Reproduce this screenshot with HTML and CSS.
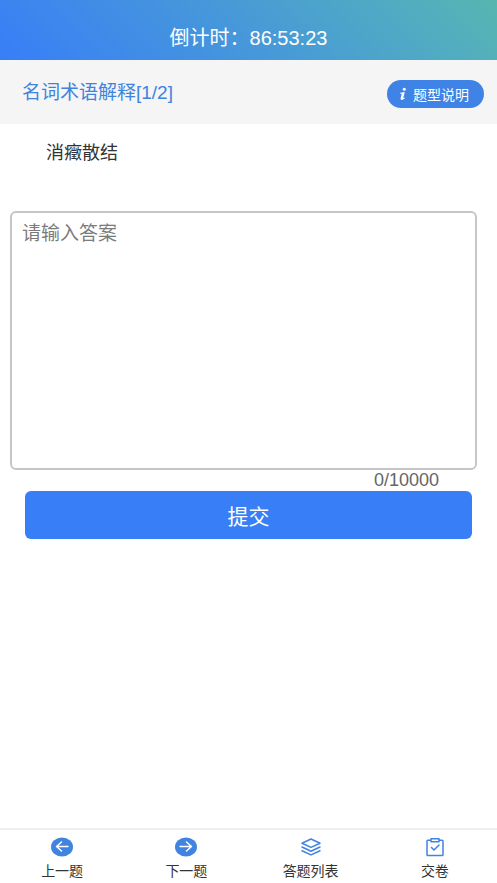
FILE: index.html
```html
<!DOCTYPE html>
<html lang="zh-CN">
<head>
<meta charset="utf-8">
<meta name="viewport" content="width=device-width, initial-scale=1">
<title>名词术语解释</title>
<link rel="stylesheet" href="styles.css">
</head>
<body>
<header class="timer">倒计时：86:53:23</header>
<section class="section-bar">
  <h1 class="section-title">名词术语解释[1/2]</h1>
  <button class="help" type="button">
    <svg class="help-icon" viewBox="0 0 8 14" aria-hidden="true">
      <circle cx="5.3" cy="2.3" r="1.5"/>
      <path d="M1.3 5.8 5.8 5 4.3 10.7c-.1.6.4.7 1.5-.1l.3.5C5 12.3 3.9 12.9 2.9 12.9 1.8 12.9 1.4 12.2 1.7 11.1L2.8 6.7H1.1Z"/>
    </svg>
    题型说明
  </button>
</section>
<main class="content">
  <label class="question" for="answer">消癥散结</label>
  <textarea class="answer" id="answer" placeholder="请输入答案" maxlength="10000"></textarea>
  <div class="counter">0/10000</div>
  <button class="submit" type="button">提交</button>
</main>
<nav class="tabs">
  <a class="tab" href="#prev">
    <svg class="tab-icon" viewBox="0 0 22 20" aria-hidden="true">
      <ellipse class="disc" cx="11" cy="10" rx="11" ry="9.5"/>
      <path class="arrow" d="M17 9.5H6M10.5 5 5.5 9.5l5 4.5"/>
    </svg>
    上一题
  </a>
  <a class="tab" href="#next">
    <svg class="tab-icon" viewBox="0 0 22 20" aria-hidden="true">
      <ellipse class="disc" cx="11" cy="10" rx="11" ry="9.5"/>
      <path class="arrow" d="M5 9.5h11M11.5 5l5 4.5-5 4.5"/>
    </svg>
    下一题
  </a>
  <a class="tab" href="#list">
    <svg class="tab-icon" viewBox="0 0 22 20" aria-hidden="true">
      <path class="line" d="M11 2 20 6.2 11 10.4 2 6.2ZM2 10l9 4.2L20 10M2 13.7l9 4.2 9-4.2"/>
    </svg>
    答题列表
  </a>
  <a class="tab" href="#hand-in">
    <svg class="tab-icon" viewBox="0 0 22 20" aria-hidden="true">
      <path class="line" d="M7 3.2H3.8Q3 3.2 3 4V17.7Q3 18.5 3.8 18.5H18.2Q19 18.5 19 17.7V4Q19 3.2 18.2 3.2H15M7 1.7H15V4.7H7ZM7.5 10.5l2.5 2.5 5-5"/>
    </svg>
    交卷
  </a>
</nav>
</body>
</html>
```
FILE: styles.css
```css
* {
  box-sizing: border-box;
}

body {
  margin: 0;
  min-height: 100vh;
  display: flex;
  flex-direction: column;
  background: #fff;
  color: #333;
  font-family: "Liberation Sans", "Noto Sans CJK SC", sans-serif;
}

button,
textarea {
  font-family: inherit;
}

.timer {
  padding: 23px 0 7px;
  background: linear-gradient(45deg, #387ef8, #4799d8 50%, #50abc3 80%, #57b6b0);
  color: #fff;
  font-size: 20px;
  line-height: 30px;
  text-align: center;
}

.section-bar {
  display: flex;
  align-items: center;
  justify-content: space-between;
  padding: 16px 13px 16px 22px;
  background: #f5f5f6;
}

.section-title {
  margin: 0;
  padding-top: 2px;
  color: #4083de;
  font-size: 19px;
  font-weight: 400;
  line-height: 30px;
}

.help {
  display: flex;
  align-items: center;
  gap: 6px;
  height: 28px;
  margin-top: 4px;
  padding: 0 15px 0 12px;
  border: 0;
  border-radius: 14px;
  background: #4083e6;
  color: #fff;
  font-size: 14px;
}

.help-icon {
  width: 8px;
  height: 14px;
  fill: #fff;
}

.content {
  flex: 1;
  display: flex;
  flex-direction: column;
  padding: 13px 20px 0 10px;
}

.question {
  margin: 0 36px 42px;
  font-size: 18px;
  line-height: 32px;
}

.answer {
  display: block;
  width: 100%;
  height: 259px;
  padding: 7px 10px;
  border: 2px solid #c5c5ca;
  border-radius: 6px;
  background: #fff;
  color: #333;
  font-size: 19px;
  line-height: 28px;
  resize: none;
}

.answer::placeholder {
  color: #7b7b7b;
}

.counter {
  padding-right: 38px;
  color: #666;
  font-size: 18px;
  line-height: 21px;
  text-align: right;
}

.submit {
  height: 48px;
  margin: 0 5px 0 15px;
  border: 0;
  border-radius: 6px;
  background: #387ef6;
  color: #fff;
  font-size: 21px;
}

.tabs {
  display: grid;
  grid-template-columns: repeat(4, 1fr);
  padding-top: 7px;
  border-top: 2px solid #eee;
  background: #fff;
}

.tab {
  display: flex;
  flex-direction: column;
  align-items: center;
  gap: 2px;
  color: #333;
  font-size: 14px;
  line-height: 24px;
  text-decoration: none;
}

.tab-icon {
  width: 22px;
  height: 20px;
  fill: none;
  stroke-linecap: round;
  stroke-linejoin: round;
}

.disc {
  fill: #4083e0;
}

.arrow {
  stroke: #fff;
  stroke-width: 1.5;
}

.line {
  stroke: #4083e0;
  stroke-width: 1.5;
}
```
